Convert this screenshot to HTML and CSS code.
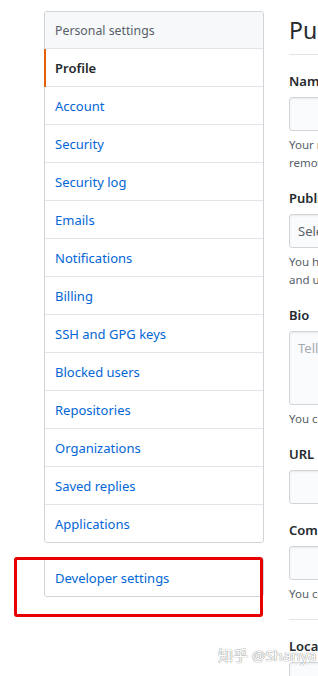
FILE: index.html
```html
<!doctype html>
<html lang="en">
  <head>
    <meta charset="UTF-8" />
    <meta name="viewport" content="width=device-width, initial-scale=1.0" />
    <title>Your Profile</title>
    <link rel="stylesheet" href="styles.css">
  </head>
  <body>
    <div class="page">
      <nav class="sidebar">
        <div class="menu">
          <div class="menu-heading">Personal settings</div>
          <a class="menu-item selected" href="#">Profile</a>
          <a class="menu-item" href="#">Account</a>
          <a class="menu-item" href="#">Security</a>
          <a class="menu-item" href="#">Security log</a>
          <a class="menu-item" href="#">Emails</a>
          <a class="menu-item" href="#">Notifications</a>
          <a class="menu-item" href="#">Billing</a>
          <a class="menu-item" href="#">SSH and GPG keys</a>
          <a class="menu-item" href="#">Blocked users</a>
          <a class="menu-item" href="#">Repositories</a>
          <a class="menu-item" href="#">Organizations</a>
          <a class="menu-item" href="#">Saved replies</a>
          <a class="menu-item" href="#">Applications</a>
        </div>

        <div class="menu menu-dev">
          <a class="menu-item" href="#">Developer settings</a>
        </div>
      </nav>

      <main class="content">
        <h2 class="page-title">Public profile</h2>

        <div class="form-group">
          <label class="form-label">Name</label>
          <input class="form-control" type="text" />
          <p class="note">Your name may appear around GitHub where you contribute or are mentioned. You can<br />remove it at any time.</p>
        </div>

        <div class="form-group">
          <label class="form-label">Public email</label>
          <div class="form-control select">Select a verified email to display</div>
          <p class="note">You have set your email address to private. To toggle email privacy, go to email settings<br />and uncheck "Keep my email address private."</p>
        </div>

        <div class="form-group">
          <label class="form-label">Bio</label>
          <textarea class="form-control textarea" placeholder="Tell us a little bit about yourself"></textarea>
          <p class="note">You can @mention other users and organizations to link to them.</p>
        </div>

        <div class="form-group">
          <label class="form-label">URL</label>
          <input class="form-control" type="text" />
        </div>

        <div class="form-group">
          <label class="form-label">Company</label>
          <input class="form-control" type="text" />
          <p class="note">You can @mention your company's GitHub organization to link it.</p>
        </div>

        <hr class="divider" />

        <div class="form-group">
          <label class="form-label">Location</label>
          <input class="form-control" type="text" />
        </div>
      </main>
    </div>

    <!-- annotation + watermark from the screenshot -->
    <div class="highlight"></div>
    <div class="watermark">知乎 @Shanya</div>
  </body>
</html>
```

FILE: styles.css
```css
* {
  margin: 0;
  padding: 0;
  box-sizing: border-box;
}

html,
body {
  height: 100%;
  overflow: hidden;
  background: #fff;
  color: #24292e;
  font-family: 'Noto Sans', 'Noto Sans CJK SC', sans-serif;
  font-size: 13px;
}

.page {
  display: flex;
  width: 760px;
  padding: 11px 0 0 44px;
}

/* Sidebar menu */
.sidebar {
  flex: none;
  width: 220px;
}

.menu {
  border: 1px solid #d1d5da;
  border-radius: 3px;
  background: #fff;
}

.menu-dev {
  margin-top: 15px;
}

.menu-heading {
  padding: 9px 10px 7px;
  line-height: 20px;
  font-size: 12.3px;
  color: #586069;
  background: #f6f8fa;
  border-bottom: 1px solid #e1e4e8;
  border-radius: 3px 3px 0 0;
}

.menu-item {
  position: relative;
  display: block;
  padding: 9px 10px 7px;
  line-height: 21px;
  color: #0366d6;
  text-decoration: none;
  border-bottom: 1px solid #e1e4e8;
}

.menu-item:last-child {
  border-bottom: 0;
}

.menu-item.selected {
  color: #24292e;
  font-weight: 600;
}

.menu-item.selected::before {
  content: '';
  position: absolute;
  top: 0;
  bottom: -1px;
  left: -1px;
  width: 2px;
  background: #e36209;
}

/* Profile form */
.content {
  flex: none;
  width: 440px;
  margin-left: 25px;
}

.page-title {
  margin-top: 4px;
  padding-bottom: 9px;
  font-size: 23px;
  font-weight: 400;
  line-height: 30px;
  border-bottom: 1px solid #e1e4e8;
}

.form-group {
  margin-top: 16px;
}

.form-label {
  display: block;
  margin-bottom: 5px;
  font-weight: 600;
  line-height: 21px;
}

.form-control {
  display: block;
  width: 440px;
  height: 34px;
  padding: 6px 8px;
  font: inherit;
  line-height: 20px;
  color: #24292e;
  background: #fafbfc;
  border: 1px solid #d1d5da;
  border-radius: 3px;
  box-shadow: inset 0 1px 2px rgba(27, 31, 35, 0.075);
}

.select {
  color: #586069;
}

.textarea {
  height: 74px;
  resize: none;
}

.textarea::placeholder {
  color: #a3aab1;
}

.note {
  margin-top: 5px;
  font-size: 11.5px;
  line-height: 18px;
  color: #586069;
  white-space: nowrap;
}

.divider {
  margin-top: 16px;
  border: 0;
  border-top: 1px solid #e1e4e8;
}

/* Overlays */
.highlight {
  position: absolute;
  top: 557px;
  left: 14px;
  width: 249px;
  height: 60px;
  border: 3px solid #e60000;
  border-radius: 3px;
}

.watermark {
  position: absolute;
  top: 644px;
  left: 218px;
  font-size: 15px;
  line-height: 22px;
  color: #fff;
  text-shadow: 0 0 1px #8a8a8a, 0 0 1px #8a8a8a;
  white-space: nowrap;
}
```
